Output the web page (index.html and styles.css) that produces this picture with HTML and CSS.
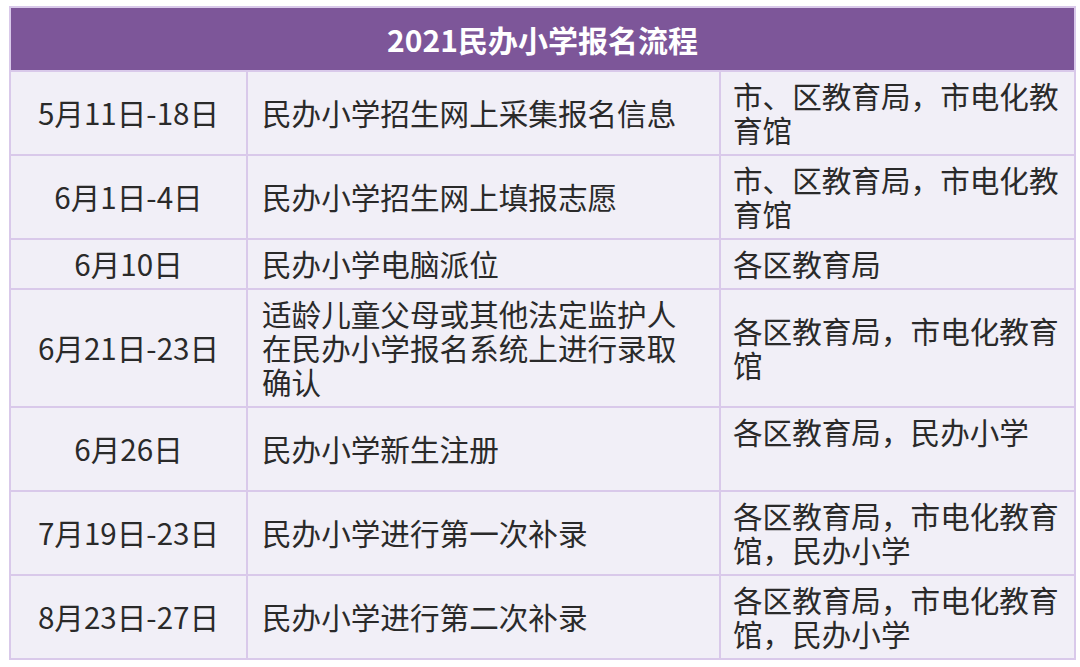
FILE: index.html
```html
<!DOCTYPE html>
<html lang="zh-CN">
<head>
<meta charset="utf-8">
<title>2021民办小学报名流程</title>
<link rel="stylesheet" href="styles.css">
</head>
<body>
<table class="flow">
  <colgroup>
    <col class="c-date">
    <col class="c-task">
    <col class="c-org">
  </colgroup>
  <thead>
    <tr><th colspan="3" class="title">2021民办小学报名流程</th></tr>
  </thead>
  <tbody>
    <tr><td class="date">5月11日-18日</td><td class="task">民办小学招生网上采集报名信息</td><td class="org">市、区教育局，市电化教育馆</td></tr>
    <tr><td class="date">6月1日-4日</td><td class="task">民办小学招生网上填报志愿</td><td class="org">市、区教育局，市电化教育馆</td></tr>
    <tr><td class="date">6月10日</td><td class="task">民办小学电脑派位</td><td class="org">各区教育局</td></tr>
    <tr><td class="date">6月21日-23日</td><td class="task">适龄儿童父母或其他法定监护人在民办小学报名系统上进行录取确认</td><td class="org">各区教育局，市电化教育馆</td></tr>
    <tr><td class="date">6月26日</td><td class="task">民办小学新生注册</td><td class="org top">各区教育局，民办小学<br>&nbsp;</td></tr>
    <tr><td class="date">7月19日-23日</td><td class="task">民办小学进行第一次补录</td><td class="org">各区教育局，市电化教育馆，民办小学</td></tr>
    <tr><td class="date">8月23日-27日</td><td class="task">民办小学进行第二次补录</td><td class="org">各区教育局，市电化教育馆，民办小学</td></tr>
  </tbody>
</table>
</body>
</html>
```
FILE: styles.css
```css
html, body {
  margin: 0;
  padding: 0;
  background: #ffffff;
}
body {
  padding: 6px 0 0 9px;
  font-family: "Noto Sans CJK SC", "Noto Sans", sans-serif;
}
.flow {
  border-collapse: collapse;
  width: 1065px;
  table-layout: fixed;
  color: #2a2a2a;
  font-size: 29.6px;
  line-height: 34px;
}
.c-date { width: 237px; }
.c-task { width: 473px; }
.c-org { width: 355px; }
.flow th, .flow td {
  border: 2px solid #d9c9ea;
}
.title {
  background: #7d5699;
  color: #ffffff;
  font-weight: bold;
  font-size: 30px;
  height: 62px;
  padding: 0;
  text-align: center;
  vertical-align: middle;
}
.flow td {
  background: #f1eff7;
  padding: 7px 0;
  vertical-align: middle;
}
.date {
  text-align: center;
}
.flow .task {
  padding-left: 14px;
  padding-right: 30px;
}
.flow .org {
  padding-left: 12px;
  padding-right: 14px;
}
.flow .top {
  vertical-align: top;
}
```
